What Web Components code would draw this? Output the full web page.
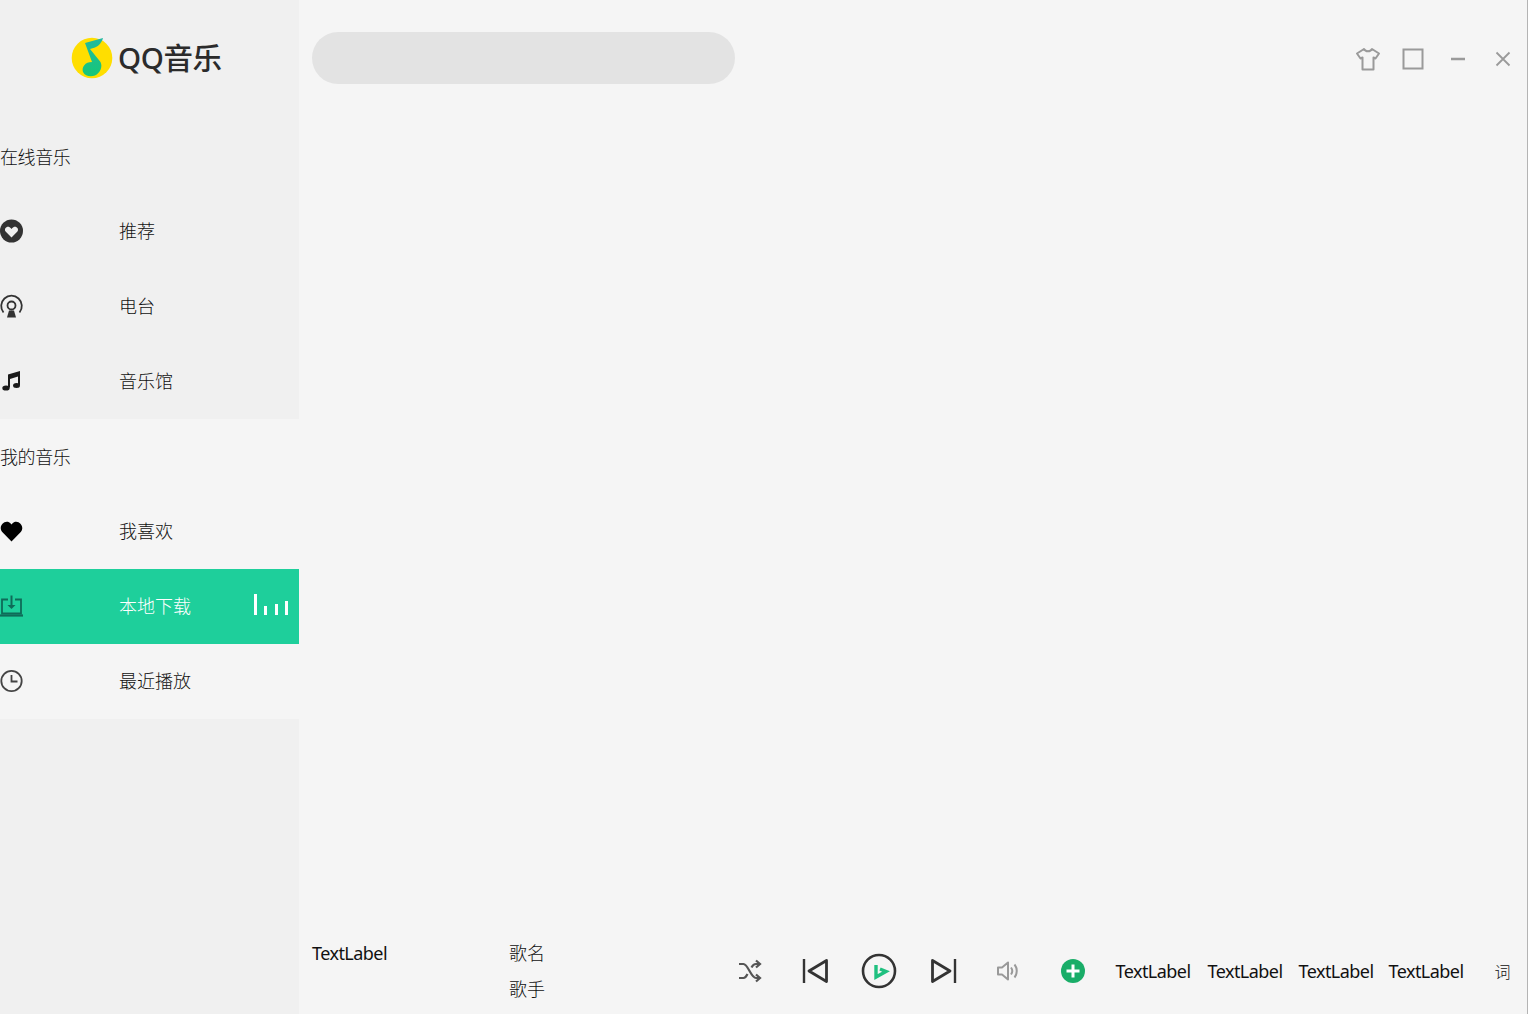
<!DOCTYPE html>
<html lang="zh">
<head>
<meta charset="utf-8">
<title>QQ音乐</title>
<style>
  html, body { margin: 0; padding: 0; height: 100%; }
  body { font: 18px "Noto Sans", "Noto Sans CJK SC", sans-serif; color: #111; overflow: hidden; }
</style>
</head>
<body>
<qq-app>
  <qq-sidebar slot="side">
    <nav-group title="在线音乐">
      <nav-item label="推荐">
        <svg slot="icon" width="24" height="24" viewBox="0 0 24 24"><circle cx="11.500" cy="12" r="11.500" fill="#333"/><path d="M11.500 18.500 5.600 12.600C3.600 10 6.800 6.600 9.600 8.200 10.400 8.700 11 9.200 11.500 10 12 9.200 12.600 8.700 13.400 8.200 16.200 6.600 19.400 10 17.400 12.600Z" fill="#f0f0f0"/></svg>
      </nav-item>
      <nav-item label="电台">
        <svg slot="icon" width="24" height="24" viewBox="0 0 24 24" fill="none" stroke="#333"><path d="M3.500 18.500A10.300 10.300 0 1 1 19.500 18.500" stroke-width="1.800"/><circle cx="11.500" cy="11.500" r="4" stroke-width="1.800"/><path d="M7 23.500 9 16.500H14L16 23.500Z" fill="#333" stroke="none"/></svg>
      </nav-item>
      <nav-item label="音乐馆">
        <svg slot="icon" width="24" height="24" viewBox="0 0 24 24"><path d="M8 5.500 20 2V16H18V7.500L10 10V18.500H8Z" fill="#1a1a1a"/><ellipse cx="6" cy="19" rx="3.700" ry="2.600" fill="#1a1a1a"/><ellipse cx="16.500" cy="16.500" rx="3.500" ry="2.500" fill="#1a1a1a"/></svg>
      </nav-item>
    </nav-group>
    <nav-group title="我的音乐" light>
      <nav-item label="我喜欢">
        <svg slot="icon" width="24" height="24" viewBox="0 0 24 24"><path d="M11.500 22.500 2 12.800C-1.800 8 3.500 1 9 3.300 10 3.800 10.900 4.500 11.500 5.500 12.100 4.500 13 3.800 14 3.300 19.500 1 24.800 8 21 12.800Z" fill="#000"/></svg>
      </nav-item>
      <nav-item label="本地下载" active>
        <svg slot="icon" width="24" height="24" viewBox="0 0 24 24" fill="none" stroke="#0f6b58" stroke-width="1.800"><path d="M8 5.500H2V19.500H21V5.500H15"/><path d="M0 21.500H23" stroke-width="2.200"/><path d="M11.500 1.500V12" stroke-width="2"/><path d="M7.500 11H15.500L11.500 15Z" fill="#0f6b58" stroke="none"/></svg>
        <eq-bars slot="extra"></eq-bars>
      </nav-item>
      <nav-item label="最近播放">
        <svg slot="icon" width="24" height="24" viewBox="0 0 24 24" fill="none" stroke="#444" stroke-width="1.800"><circle cx="11.500" cy="12" r="10.200"/><path d="M11.500 6V12.500H17.500"/></svg>
      </nav-item>
    </nav-group>
  </qq-sidebar>
  <qq-topbar slot="top"></qq-topbar>
  <qq-player slot="bottom"></qq-player>
</qq-app>

<script>
class QQApp extends HTMLElement {
  constructor() {
    super()
    this.attachShadow({ mode: 'open' })
    this.shadowRoot.innerHTML = `
      <style>
        :host { display: flex; width: 1528px; height: 1014px; background: #f5f5f5; box-sizing: border-box; border-right: 1px solid #b4b4b4; }
        .side { flex: 0 0 299px; }
        .main { flex: 1; display: flex; flex-direction: column; justify-content: space-between; min-width: 0; }
      </style>
      <div class="side"><slot name="side"></slot></div>
      <div class="main">
        <slot name="top"></slot>
        <slot name="bottom"></slot>
      </div>
    `
  }
}

class QQSidebar extends HTMLElement {
  constructor() {
    super()
    this.attachShadow({ mode: 'open' })
    this.shadowRoot.innerHTML = `
      <style>
        :host { display: block; height: 1014px; background: #f0f0f0; }
        .logo { height: 119px; box-sizing: border-box; padding: 0 0 3px 71px; display: flex; align-items: center; gap: 5px; }
        .name { font: 500 29.500px/1 "Noto Sans", "Noto Sans CJK SC", sans-serif; color: #2b2b2b; letter-spacing: -0.4px; white-space: nowrap; }
      </style>
      <div class="logo">
        <svg width="42" height="42" viewBox="0 0 42 42">
          <defs><linearGradient id="g" x1="0" y1="0" x2="0" y2="1"><stop offset="0" stop-color="#22b9a0"/><stop offset="1" stop-color="#16c777"/></linearGradient></defs>
          <circle cx="21" cy="21" r="20.300" fill="#ffde00"/>
          <path d="M14 6 32 1C31 5 28 9 24 10.500L19 12 29.500 25C32 30 29 36 24 38.500 20 40 14 39.500 12 35 10.500 30 14 25 21 25Z" fill="url(#g)"/>
        </svg>
        <span class="name">QQ音乐</span>
      </div>
      <slot></slot>
    `
  }
}

class NavGroup extends HTMLElement {
  constructor() {
    super()
    this.attachShadow({ mode: 'open' })
    this.shadowRoot.innerHTML = `
      <style>
        :host { display: block; }
        :host([light]) { background: #f5f5f5; }
        .title { height: 75px; line-height: 74px; letter-spacing: -0.4px; font-family: "Noto Sans CJK SC", sans-serif; font-weight: 300; }
      </style>
      <div class="title"></div>
      <slot></slot>
    `
  }
  connectedCallback() {
    this.shadowRoot.querySelector('.title').textContent = this.getAttribute('title')
    this.removeAttribute('title')
  }
}

class NavItem extends HTMLElement {
  constructor() {
    super()
    this.attachShadow({ mode: 'open' })
    this.shadowRoot.innerHTML = `
      <style>
        :host { display: flex; align-items: center; height: 75px; position: relative; }
        :host([active]) { background: #1ecf9b; color: #fff; }
        .icon { flex: 0 0 119px; display: flex; align-items: center; height: 24px; padding-bottom: 2px; }
        .label { flex: 1; padding-bottom: 4px; font-family: "Noto Sans CJK SC", sans-serif; font-weight: 300; }
        ::slotted(svg) { display: block; }
      </style>
      <div class="icon"><slot name="icon"></slot></div>
      <div class="label"></div>
      <slot name="extra"></slot>
    `
  }
  connectedCallback() {
    this.shadowRoot.querySelector('.label').textContent = this.getAttribute('label')
  }
}

class EqBars extends HTMLElement {
  constructor() {
    super()
    this.attachShadow({ mode: 'open' })
    this.shadowRoot.innerHTML = `
      <style>
        :host { display: flex; align-items: flex-end; justify-content: space-between; width: 34px; height: 21px; margin: 0 11px 4px 0; }
        i { display: block; width: 3px; background: #fff; }
      </style>
      <i style="height:21px"></i><i style="height:9px"></i><i style="height:11px"></i><i style="height:14px"></i>
    `
  }
}

class QQTopbar extends HTMLElement {
  constructor() {
    super()
    this.attachShadow({ mode: 'open' })
    this.shadowRoot.innerHTML = `
      <style>
        :host { display: flex; align-items: flex-start; justify-content: space-between; padding: 32px 0 0 13px; }
        .search { width: 423px; height: 52px; border-radius: 26px; background: #e3e3e3; }
        .win { display: flex; margin: 12px 2px 0 0; }
        .win span { width: 45px; height: 30px; display: flex; align-items: center; justify-content: center; }
        svg { display: block; fill: none; stroke: #9a9a9a; stroke-width: 2; }
      </style>
      <div class="search"></div>
      <div class="win">
        <span><svg width="26" height="26" viewBox="0 0 26 26"><path d="M9 3 2 7.500 5.500 12.500 7.500 11.500V23.500H18.500V11.500L20.500 12.500 24 7.500 17 3C15.500 6 10.500 6 9 3Z" stroke-linejoin="round"/></svg></span>
        <span><svg width="22" height="22" viewBox="0 0 22 22"><rect x="1.500" y="1.500" width="19" height="19"/></svg></span>
        <span><svg width="16" height="4" viewBox="0 0 16 4"><path d="M1 2H15" stroke-width="2.500"/></svg></span>
        <span><svg width="16" height="16" viewBox="0 0 16 16"><path d="M1.500 1.500 14.500 14.500M14.500 1.500 1.500 14.500" stroke-width="1.800"/></svg></span>
      </div>
    `
  }
}

class QQPlayer extends HTMLElement {
  constructor() {
    super()
    this.attachShadow({ mode: 'open' })
    this.shadowRoot.innerHTML = `
      <style>
        :host { display: flex; align-items: center; height: 86px; padding-left: 13px; box-sizing: border-box; }
        .cover { flex: 0 0 197px; align-self: flex-start; height: 36px; line-height: 36px; margin-top: 7px; letter-spacing: -0.55px; }
        .song { flex: 0 0 209px; margin-top: -2px; display: grid; grid-auto-rows: 36px; line-height: 36px; font-family: "Noto Sans CJK SC", sans-serif; font-weight: 300; }
        .ctl { display: flex; }
        .ctl span { width: 64.500px; height: 40px; display: flex; align-items: center; justify-content: center; }
        svg { display: block; fill: none; }
        .labels { display: flex; margin-left: 10.500px; }
        .labels b { font-weight: 400; white-space: nowrap; letter-spacing: -0.55px; }
        .ci { margin-left: 16px; font-family: "Noto Sans CJK SC", sans-serif; font-weight: 300; font-size: 16px; }
      </style>
      <div class="cover">TextLabel</div>
      <div class="song"><div>歌名</div><div>歌手</div></div>
      <div class="ctl">
        <span><svg width="24" height="24" viewBox="0 0 24 24" stroke="#555" stroke-width="2.200"><path d="M1 5H5.500C10 5 13 19 18 19H22M1 19H5.500C7.500 19 8.500 17 9.500 15M13.500 8.500C14.500 6.500 16 5 18 5H22"/><path d="M18 1.500 22 5 18 8.500M18 15.500 22 19 18 22.500"/></svg></span>
        <span><svg width="26" height="26" viewBox="0 0 26 26" stroke="#333" stroke-width="2.800" stroke-linejoin="round"><path d="M2 1V25" stroke-width="2.400"/><path d="M24.500 2.500 7 13 24.500 23.500Z"/></svg></span>
        <span><svg width="36" height="36" viewBox="0 0 36 36"><circle cx="18" cy="18" r="16" stroke="#333" stroke-width="2.600"/><path d="M15 12V24L25 18.500 19 16" stroke="#1fc07f" stroke-width="3.400"/></svg></span>
        <span><svg width="26" height="26" viewBox="0 0 26 26" stroke="#333" stroke-width="2.800" stroke-linejoin="round"><path d="M24 1V25" stroke-width="2.400"/><path d="M1.500 2.500 19 13 1.500 23.500Z"/></svg></span>
        <span><svg width="24" height="24" viewBox="0 0 24 24" stroke="#999" stroke-width="2"><path d="M2 8.500H6L12 3.500V20.500L6 15.500H2Z" stroke-linejoin="round"/><path d="M15 8.500C16.500 10.500 16.500 13.500 15 15.500M18.500 5.500C21.500 9 21.500 15 18.500 18.500"/></svg></span>
        <span><svg width="26" height="26" viewBox="0 0 26 26"><circle cx="13" cy="13" r="12" fill="#19ad68"/><path d="M13 6.500V19.500M6.500 13H19.500" stroke="#fff" stroke-width="3"/></svg></span>
      </div>
      <div class="labels"><b style="width:92px">TextLabel</b><b style="width:91px">TextLabel</b><b style="width:90px">TextLabel</b><b style="width:90px">TextLabel</b></div>
      <div class="ci">词</div>
    `
  }
}

customElements.define('qq-app', QQApp)
customElements.define('qq-sidebar', QQSidebar)
customElements.define('nav-group', NavGroup)
customElements.define('nav-item', NavItem)
customElements.define('eq-bars', EqBars)
customElements.define('qq-topbar', QQTopbar)
customElements.define('qq-player', QQPlayer)
</script>
</body>
</html>
